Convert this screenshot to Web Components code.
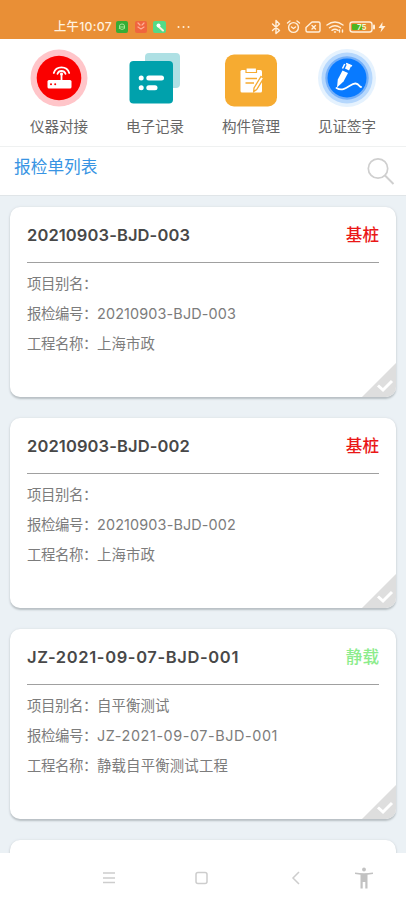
<!DOCTYPE html>
<html lang="zh-CN">
<head>
<meta charset="utf-8">
<title>报检单列表</title>
<style>
body{margin:0;width:406px;height:902px;overflow:hidden;background:#ebf1f5;font-family:Inter,"Noto Sans CJK SC",sans-serif;color:#777}
</style>
</head>
<body>
<inspection-app></inspection-app>
<script>
// Text set to a given advance width by even tracking.
class TrackedText extends HTMLElement{
  connectedCallback(){
    const r=this.attachShadow({mode:'open'});
    r.innerHTML='<style>:host{display:inline-block;white-space:nowrap;line-height:1.25}</style><span></span>';
    const s=r.querySelector('span'),t=this.getAttribute('text');
    s.textContent=t;
    const w=+this.getAttribute('w');
    if(w&&t) s.style.letterSpacing=((w-s.getBoundingClientRect().width)/t.length)+'px';
  }
}
customElements.define('tracked-text',TrackedText);

class StatusBar extends HTMLElement{
  connectedCallback(){
    this.attachShadow({mode:'open'}).innerHTML=`<style>
    :host{display:flex;box-sizing:border-box;height:39px;padding:14px 18px 0 54px;background:#e98f36;color:#fff1df;align-items:center;justify-content:space-between}
    div{display:flex;align-items:center}tracked-text{font-size:12.3px;font-weight:500}
    svg{display:block;fill:none;stroke:#fff0dc;stroke-width:1.4;stroke-linecap:round;stroke-linejoin:round}
    </style>
    <div><tracked-text text="上午10:07" w="58"></tracked-text>
    <svg width="80" height="16" viewBox="0 0 80 16" style="margin-left:3px">
      <rect x="1" y="2" width="12" height="12" rx="2" fill="#36ad35" stroke="none"/><path d="M4.500 9.500V7q0-2 2.500-2t2.500 2v2.500q-2.500 2-5 0zM5 8h4" stroke="#a5e896" stroke-width="1"/>
      <rect x="20" y="2" width="12" height="12" rx="2" fill="#f0653e" stroke="none"/><path d="M23 4l2 2m4-2l-2 2M23 8l3 2 3-2" stroke="#ffb09a" stroke-width="1.200"/>
      <rect x="38" y="2" width="13" height="12" rx="2" fill="#53da87" stroke="none"/><path d="M43 7l5 4.500" stroke-width="2"/><circle cx="43.500" cy="6.500" r="2" fill="#fff" stroke="none"/>
      <g fill="#fff0dc" stroke="none"><circle cx="63.500" cy="8" r="1"/><circle cx="68.500" cy="8" r="1"/><circle cx="73.500" cy="8" r="1"/></g>
    </svg></div>
    <svg width="118" height="16" viewBox="0 0 118 16">
      <path d="M2.500 5l7 6.500L6 14.500v-13L9.500 5l-7 6.500"/>
      <circle cx="23.500" cy="8.500" r="4.900"/><path d="M17.500 4l2.500-2m9.500 2L27 2M21.500 8l2 1.500 2-1.500"/>
      <path d="M42 3h6.500q1.500 0 1.500 1.500v7q0 1.500-1.500 1.500H37.500q-1.500 0-1.500-1.500V8.500zM42 6.500l3.500 3.500m0-3.500L42 10"/>
      <path d="M57 6q8-6 16 0M59.500 8.800q5.500-4 11 0M62 11.300q3-2 6 0M64.500 13h1M69.500 13v-2m3 2v-2"/>
      <rect x="80" y="3" width="22" height="10" rx="2.500"/><rect x="82" y="5" width="10.500" height="6" rx="1" fill="#4bb51f" stroke="none"/><path d="M104 6.500v3" stroke-width="2"/>
      <text x="87" y="10.800" font-size="8" font-weight="600" font-family="Inter,sans-serif" fill="#f1ffd9" stroke="none">75</text>
      <path d="M112.500 3L108.500 9h3l-1 4.500 5-6.500h-3.200z" fill="#fff0dc" stroke="none"/>
    </svg>`;
  }
}
customElements.define('status-bar',StatusBar);

const ICONS={
router:`<circle cx="30" cy="30" r="28.500" fill="#ffc5c9"/><circle cx="30" cy="30" r="22.300" fill="#fa0000"/>
 <path d="M20 32h21q1.500 0 1.500 1.500v5.500q0 1.500-1.500 1.500H20q-1.500 0-1.500-1.500v-5.500q0-1.500 1.500-1.500z" fill="#fff"/><path d="M32.500 26v7M24.800 25a8 7.600 0 0 1 15.400 0M28.500 25.800a4.200 4 0 0 1 8 0" fill="none" stroke="#fff" stroke-width="1.800" stroke-linecap="round"/><circle cx="32.500" cy="26" r="1.500" fill="#fff"/><circle cx="22" cy="36.300" r="1" fill="#fa0000"/><circle cx="26.200" cy="36.300" r="1" fill="#fa0000"/>`,
record:`<rect x="20" y="5" width="35" height="35" rx="4" fill="#aee0e4"/><rect x="4.500" y="13" width="43.500" height="42.500" rx="4" fill="#00a1ac"/><g fill="#fff"><circle cx="16.200" cy="30" r="2.500"/><circle cx="16.200" cy="39.700" r="2.500"/><rect x="21.300" y="27.500" width="17.700" height="5" rx="2.500"/><rect x="21.300" y="37.200" width="11.200" height="5" rx="2.500"/></g>`,
clip:`<rect x="4" y="6.500" width="52" height="52" rx="9" fill="#f6ab31"/><path d="M21 22h18.500q1.500 0 1.500 1.500V43q0 1.500-1.500 1.500H21q-1.500 0-1.500-1.500V23.500q0-1.500 1.500-1.500z" fill="#fff"/><path d="M25 20h10.500v4.500H25z" fill="#fff" stroke="#f6ab31" stroke-width="1.200"/><path d="M24.500 30.500h11.500M24.500 35h8.500" stroke="#f6ab31" stroke-width="1.700"/><path d="M40 28.500l2.700 1.600-7 11.500-3 2 .3-3.600z" fill="#fff" stroke="#f6ab31" stroke-width="1.300"/>`,
pen:`<circle cx="30" cy="30" r="29" fill="#e5f2fe"/><circle cx="30" cy="30" r="25.500" fill="#b5d7fd"/><circle cx="30" cy="30" r="21.700" fill="#73aff9"/><circle cx="30" cy="30" r="19.500" fill="#087aff"/><path d="M30 21.500l2.300-5" stroke="#fff" stroke-width="4.500"/><path d="M25.500 20.500l2.200-4.500M29 15.500l6 2.500" stroke="#fff" stroke-width="1.500"/><path d="M25.500 22.500l5.500 2.500-4.500 8.500-6.500 6 .8-8z" fill="#fff"/><path d="M26 21.500l7 3" stroke="#087aff" stroke-width=".9"/><path d="M19.500 40c8 5 14-5 19-4.500 4 .5 3 3 5.500 3.500" fill="none" stroke="#fff" stroke-width="1.800" stroke-linecap="round"/>`
};
class MenuItem extends HTMLElement{
  connectedCallback(){
    this.attachShadow({mode:'open'}).innerHTML=`<style>:host{display:flex;flex-direction:column;align-items:center;width:96px}svg{display:block}tracked-text{font-size:14.5px;color:#666;margin-top:9.500px}</style>
    <svg width="60" height="60" viewBox="0 0 60 60">${ICONS[this.getAttribute('icon')]}</svg><tracked-text text="${this.getAttribute('label')}" w="58"></tracked-text>`;
  }
}
customElements.define('menu-item',MenuItem);

class ListHeader extends HTMLElement{
  connectedCallback(){
    this.attachShadow({mode:'open'}).innerHTML=`<style>:host{display:flex;justify-content:space-between;box-sizing:border-box;height:49px;padding:10px 11px 0 14px;background:#fff;border-bottom:1px solid #e0e5e8}tracked-text{font-size:16.700px;color:#3894e3}svg{display:block;fill:none;stroke:#cfcfcf}</style>
    <tracked-text text="报检单列表" w="83.500"></tracked-text><svg width="29" height="30" viewBox="0 0 29 30"><circle cx="12" cy="11.500" r="9.700" stroke-width="1.700"/><path d="M19 18.500l8.500 8.500" stroke-width="1.900"/></svg>`;
  }
}
customElements.define('list-header',ListHeader);

class InspectionCard extends HTMLElement{
  connectedCallback(){
    const a=n=>this.getAttribute(n)||'';
    const row=(l,v,w)=>`<div class="row"><tracked-text class="l" text="${l}：" w="70"></tracked-text>${v?`<tracked-text text="${v}" w="${w}"></tracked-text>`:''}</div>`;
    this.attachShadow({mode:'open'}).innerHTML=`<style>
    :host{display:grid;grid-template-rows:56px 1fr 34px;box-sizing:border-box;height:189.500px;margin-bottom:.5px;background:#fff;border-radius:10px;box-shadow:0 1.500px 2px #b9c0c4,0 0 3px #dde3e8;overflow:hidden}
    header{display:flex;justify-content:space-between;align-items:center;margin:0 17px;padding-top:1px;box-sizing:border-box;border-bottom:1px solid #a0a0a0}
    .t{font-size:16.500px;font-weight:600;color:#484848}.tag{font-size:16.600px;font-weight:500;color:${a('color')}}
    section{padding:6px 17px 0}.row{display:flex;height:30px;align-items:center;font-size:14.400px}.row tracked-text{color:#7c7c7c}
    svg{display:block;justify-self:end}
    </style>${a('code')?`
    <header><tracked-text class="t" text="${a('code')}" w="${a('title-w')}"></tracked-text><tracked-text class="tag" text="${a('tag')}" w="33.200"></tracked-text></header>
    <section>${row('项目别名',a('alias'),a('alias-w'))}${row('报检编号',a('code'),a('code-w'))}${row('工程名称',a('project'),a('project-w'))}</section>
    <svg width="34" height="34" viewBox="0 0 34 34"><path d="M34 0v34H0z" fill="#dedede"/><path d="M16 22.500l5 4.500 9-9" fill="none" stroke="#fff" stroke-width="3"/></svg>`:''}`;
  }
}
customElements.define('inspection-card',InspectionCard);

class NavBar extends HTMLElement{
  connectedCallback(){
    this.attachShadow({mode:'open'}).innerHTML=`<style>:host{display:grid;grid-template-columns:109px 93px 93px 70px;justify-content:start;height:49px;background:#fff;align-items:center}svg{display:block;justify-self:end;fill:none;stroke:#cdcdcd;stroke-width:1.500;margin-right:-10px}</style>
    <svg width="20" height="22" viewBox="0 0 20 22"><path d="M4 6h12M4 11h12M4 15.500h12"/></svg>
    <svg width="20" height="22" viewBox="0 0 20 22"><rect x="4" y="5.500" width="11" height="11" rx="2"/></svg>
    <svg width="20" height="22" viewBox="0 0 20 22"><path d="M14 5L8 11l6 6"/></svg>
    <svg width="20" height="22" viewBox="0 0 20 22"><circle cx="9" cy="2.500" r="1.900" fill="#c2c2c2" stroke="none"/><path d="M0 5.500q9 1.500 18 0v1.500l-5.500.8v13.700h-2.200V15H7.700v6.500H5.500V7.800L0 7z" fill="#c2c2c2" stroke="none"/></svg>`;
  }
}
customElements.define('nav-bar',NavBar);

class InspectionApp extends HTMLElement{
  connectedCallback(){
    this.attachShadow({mode:'open'}).innerHTML=`<style>
    :host{display:grid;grid-template-rows:39px 108px 49px 657px 49px;width:406px;height:902px}
    nav{display:flex;box-sizing:border-box;background:#fff;padding:9px 11px 0;border-bottom:1.500px solid #eff1f1}
    main{display:flex;flex-direction:column;gap:21px;padding:11px 10px 0;overflow:hidden;background:#ebf1f5;min-height:0;box-sizing:border-box}
    inspection-card{flex:none}
    </style>
    <status-bar></status-bar>
    <nav><menu-item icon="router" label="仪器对接"></menu-item><menu-item icon="record" label="电子记录"></menu-item><menu-item icon="clip" label="构件管理"></menu-item><menu-item icon="pen" label="见证签字"></menu-item></nav>
    <list-header></list-header>
    <main>
    <inspection-card code="20210903-BJD-003" title-w="163" code-w="139" tag="基桩" color="#ea1717" project="上海市政" project-w="58"></inspection-card>
    <inspection-card code="20210903-BJD-002" title-w="163" code-w="139" tag="基桩" color="#ea1717" project="上海市政" project-w="58"></inspection-card>
    <inspection-card code="JZ-2021-09-07-BJD-001" title-w="212" code-w="181" tag="静载" color="#8bec8b" alias="自平衡测试" alias-w="72.500" project="静载自平衡测试工程" project-w="131"></inspection-card>
    <inspection-card></inspection-card>
    </main>
    <nav-bar></nav-bar>`;
  }
}
customElements.define('inspection-app',InspectionApp);
</script>
</body>
</html>
